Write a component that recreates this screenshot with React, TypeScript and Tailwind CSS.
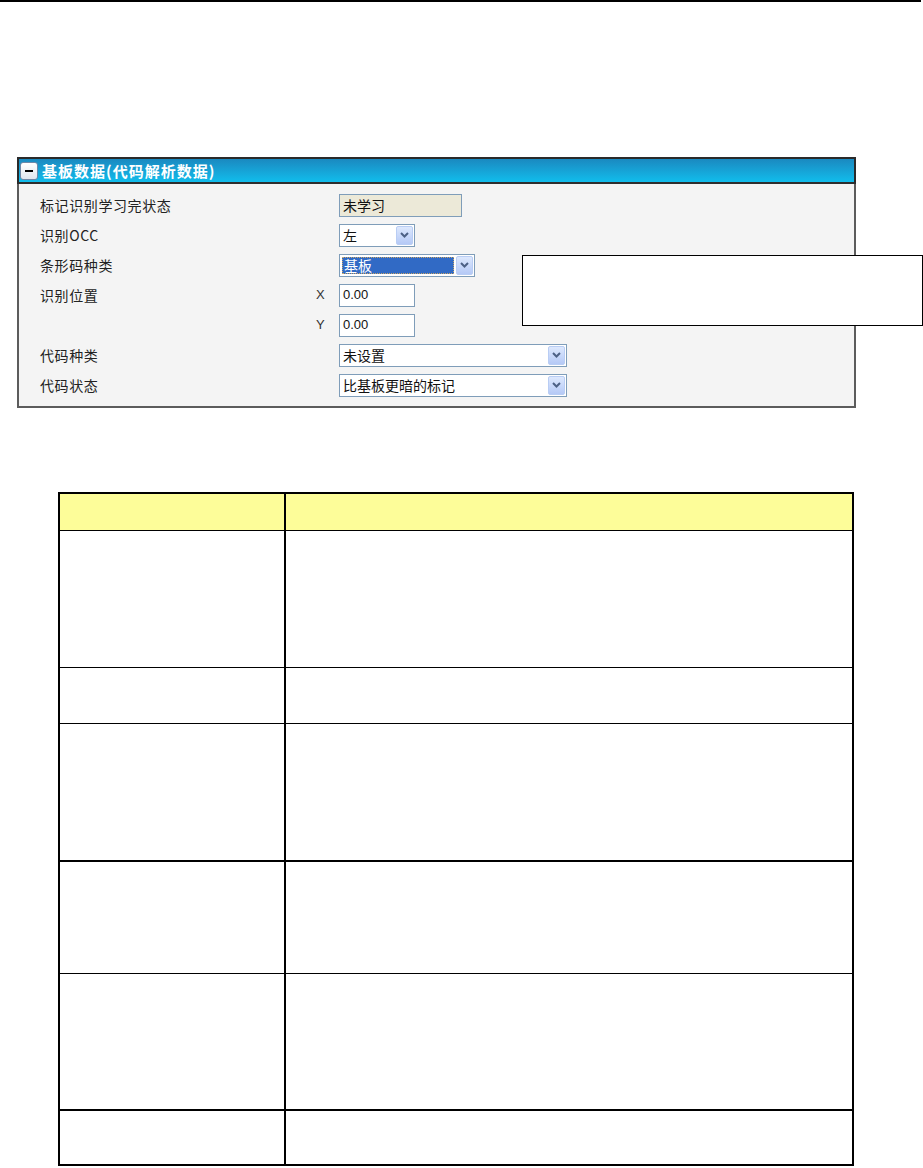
import React from 'react';

const cjk = { fontFamily: '"Noto Sans CJK SC", "Liberation Sans", sans-serif' };

const Chevron = () => (
  <svg width="9" height="6" viewBox="0 0 9 6">
    <path d="M1 1 L4.5 4.5 L8 1" fill="none" stroke="#4d6185" strokeWidth="2" />
  </svg>
);

const DropButton = () => (
  <div className="w-[17px] h-[19px] my-[1px] mr-[1px] rounded-[2px] border border-[#b9cdf4] bg-gradient-to-b from-[#dde8fd] to-[#b5c9f6] flex items-center justify-center">
    <Chevron />
  </div>
);

interface SelectProps {
  value: string;
  width: string;
  selected?: boolean;
}

const Select: React.FC<SelectProps> = ({ value, width, selected }) => (
  <div className={`${width} h-[23px] bg-white border border-[#7f9db9] flex items-stretch`}>
    <div className="flex-1 flex items-center px-[2px] min-w-0">
      {selected ? (
        <div className="w-full h-[17px] bg-[#316ac5] border border-dotted border-[#c9a66a] text-white flex items-center px-[1px] text-[14px] leading-none">
          {value}
        </div>
      ) : (
        <span className="text-[14px] leading-none text-[#111] pl-[1px]">{value}</span>
      )}
    </div>
    <DropButton />
  </div>
);

const TextInput: React.FC<{ value: string }> = ({ value }) => (
  <div className="w-[76px] h-[23px] bg-white border border-[#7f9db9] flex items-center px-[3px]">
    <span className="text-[13px] text-[#111]" style={{ fontFamily: '"Liberation Sans", Arial, sans-serif' }}>{value}</span>
  </div>
);

const Row: React.FC<{ label?: string; axis?: string; children: React.ReactNode }> = ({ label, axis, children }) => (
  <div className="h-[30px] flex items-center">
    <div className="w-[297px] pl-[21px] text-[14px] tracking-[0.6px] text-[#222]">{label}</div>
    <div className="w-[23px] text-[13px] text-[#333]" style={{ fontFamily: '"Liberation Sans", Arial, sans-serif' }}>{axis}</div>
    {children}
  </div>
);

const rows = [
  { h: 'h-[137px]', border: 'border-b' },
  { h: 'h-[56px]', border: 'border-b' },
  { h: 'h-[138px]', border: 'border-b-2' },
  { h: 'h-[112px]', border: 'border-b' },
  { h: 'h-[137px]', border: 'border-b-2' },
  { h: 'h-[53px]', border: '' },
];

export default function App() {
  return (
    <div className="relative w-[923px] h-[1168px] bg-white overflow-hidden" style={cjk}>
      <div className="h-[2px] w-[921px] bg-black" />

      {/* Panel */}
      <div className="mt-[155px] ml-[17px] w-[839px] border-2 border-[#5c5c5c] bg-[#f4f4f4]">
        <div className="h-[23px] bg-gradient-to-b from-[#1a89c0] to-[#10bdec] border-b-2 border-[#2e2e2e] -mt-[2px] -mx-[2px] border-t-2 border-x-2 border-t-[#2a2a2a] border-x-[#2a2a2a] box-content flex items-center">
          <div className="ml-[1px] w-[18px] h-[18px] rounded-[3px] border border-[#6e88a8] bg-gradient-to-b from-white to-[#dfe6ee] flex items-center justify-center">
            <div className="w-[8px] h-[2px] bg-black" />
          </div>
          <span className="ml-[4px] text-white font-bold text-[15px] tracking-[1px] leading-none">基板数据(代码解析数据)</span>
        </div>

        <div className="pt-[6px] pb-[6px]">
          <Row label="标记识别学习完状态">
            <div className="w-[123px] h-[23px] bg-[#ece9d8] border border-[#7f9db9] flex items-center px-[3px] text-[14px] text-[#111]">未学习</div>
          </Row>
          <Row label="识别OCC">
            <Select value="左" width="w-[76px]" />
          </Row>
          <Row label="条形码种类">
            <Select value="基板" width="w-[136px]" selected />
          </Row>
          <Row label="识别位置" axis="X">
            <TextInput value="0.00" />
          </Row>
          <Row axis="Y">
            <TextInput value="0.00" />
          </Row>
          <Row label="代码种类">
            <Select value="未设置" width="w-[228px]" />
          </Row>
          <Row label="代码状态">
            <Select value="比基板更暗的标记" width="w-[228px]" />
          </Row>
        </div>
      </div>

      {/* Callout box */}
      <div className="absolute left-[522px] top-[255px] w-[401px] h-[71px] bg-white border-[1.5px] border-black" />

      {/* Table */}
      <div className="mt-[84px] ml-[58px] w-[796px] border-2 border-black">
        <div className="h-[37px] flex bg-[#fdfd99] border-b border-black">
          <div className="w-[226px] border-r-2 border-black" />
          <div className="flex-1" />
        </div>
        {rows.map((r, i) => (
          <div key={i} className={`${r.h} flex ${r.border} border-black`}>
            <div className="w-[226px] border-r-2 border-black" />
            <div className="flex-1" />
          </div>
        ))}
      </div>
    </div>
  );
}
